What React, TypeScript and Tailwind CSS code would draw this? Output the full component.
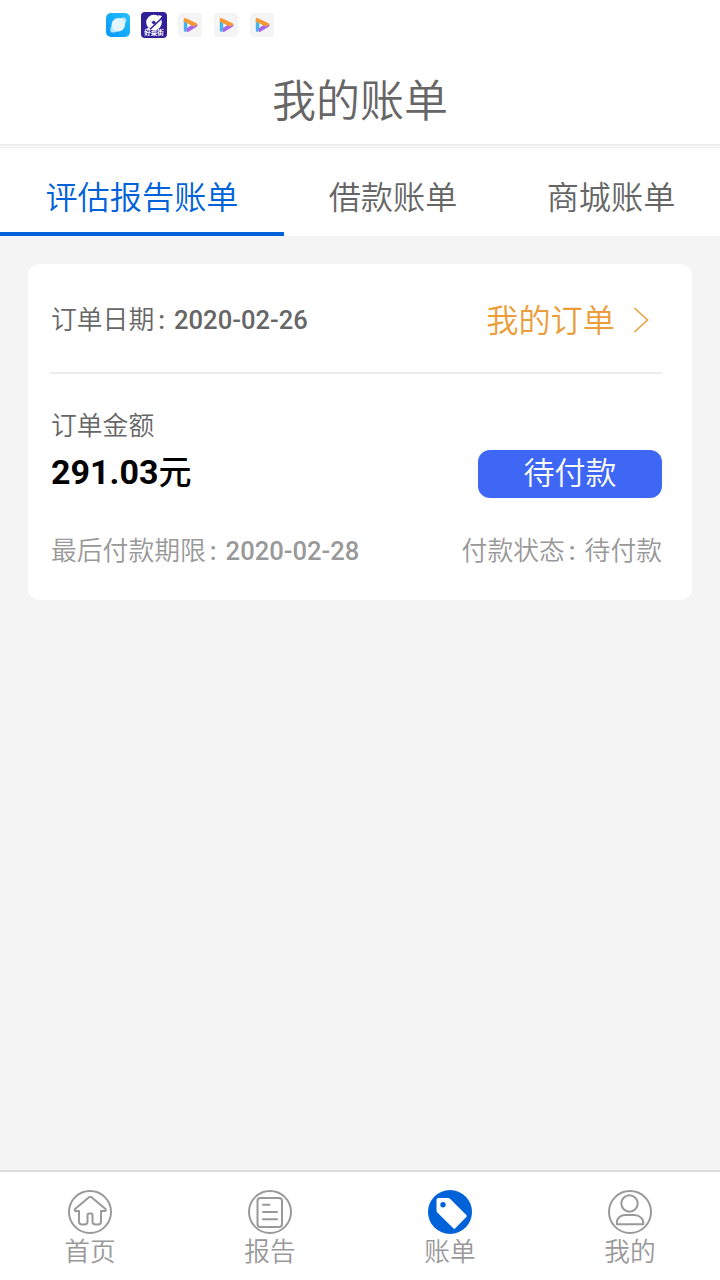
import type { ReactNode } from 'react';

const tabs = [
  { label: '评估报告账单', active: true, width: 'w-[284px]' },
  { label: '借款账单', active: false, width: 'w-[218px]' },
  { label: '商城账单', active: false, width: 'w-[218px]' },
];

function PlanetIcon() {
  return (
    <svg className="w-6 h-6" viewBox="0 0 24 24">
      <defs>
        <linearGradient id="sky" x1="1" y1="0" x2="0" y2="1">
          <stop offset="0" stopColor="#25c2fb" />
          <stop offset="1" stopColor="#0796fb" />
        </linearGradient>
      </defs>
      <rect width="24" height="24" rx="5" fill="url(#sky)" />
      <ellipse cx="12.3" cy="12" rx="10" ry="4.6" transform="rotate(-42 12.3 12)" fill="#b9e6fd" />
      <circle cx="12.3" cy="11.8" r="6.8" fill="#e4f5fe" />
    </svg>
  );
}

function WalletIcon() {
  return (
    <span className="relative block w-[26px] h-[26px] overflow-hidden rounded-[4px] bg-[#31209a]">
      <svg className="w-[26px] h-[26px]" viewBox="0 0 26 26">
        <circle cx="13" cy="10.5" r="7.8" fill="#fff" />
        <path d="M17 3l4 1-2 3M5 17l5-2-3 4z" fill="#fff" />
        <path d="M20.5 6.5L8.5 17.8" stroke="#31209a" strokeWidth="1.5" fill="none" />
        <path d="M10.3 10.2l2.7-1.7 2 2.2-2.4 1.9z" fill="#31209a" />
      </svg>
      <span className="absolute left-[-7px] w-10 top-[18px] text-center text-[6.500px] leading-[7px] font-bold text-white">好菜街</span>
    </span>
  );
}

function PlayIcon() {
  return (
    <svg className="w-6 h-6" viewBox="0 0 24 24">
      <rect width="24" height="24" rx="4" fill="#f4f4f4" />
      <path d="M5.800 7h3.400v8l-1 3.800H7q-1.200 0-1.200-1.200z" fill="#3fb5ee" />
      <path d="M19.300 11.200q.8 1.600-.7 2.600L10 18.900q-1.500.5-1.500-1.200v-2.200L16.500 10z" fill="#a866ea" />
      <path d="M5.800 6.200q0-1.700 1.700-1.100L18.600 10.300q.9.600.6 1.700l-3.300 1.500L5.800 8.800z" fill="#f49b38" />
    </svg>
  );
}

function HomeIcon() {
  return (
    <svg className="w-11 h-11" viewBox="0 0 44 44" fill="none" stroke="#999" strokeLinejoin="round" strokeLinecap="round">
      <circle cx="22" cy="22" r="21" strokeWidth="2" />
      <path
        d="M21 7.300L7 19q-1 2 1 2h3v10.500q0 3 3 3h2.500q3 0 3-3V25q0-1.500 1.500-1.500h2q1.500 0 1.500 1.500v6.500q0 3 3 3H30q3 0 3-3V21h3.500q2 0 1-2L23.500 7.300q-1.200-1-2.500 0z"
        strokeWidth="2"
      />
    </svg>
  );
}

function ReportIcon() {
  return (
    <svg className="w-11 h-11" viewBox="0 0 44 44" fill="none" stroke="#999" strokeWidth="2" strokeLinecap="round">
      <circle cx="22" cy="22" r="21" />
      <rect x="9.500" y="8" width="24.500" height="29" rx="3" />
      <path d="M15 14.800h6.500M15 22h14M15 29.200h14" />
    </svg>
  );
}

function BillIcon() {
  return (
    <svg className="w-11 h-11" viewBox="0 0 44 44">
      <circle cx="22" cy="22" r="22" fill="#0062d9" />
      <path
        fillRule="evenodd"
        d="M10.500 8H20q1.200 0 2 .8L38.300 25q1 1 0 2L27.300 38.200q-1 1-2 0L9.300 22.600q-.8-.8-.8-2V10q0-2 2-2zM15 12a2.700 2.700 0 1 0 0 5.400a2.700 2.700 0 1 0 0-5.400z"
        fill="#fff"
      />
    </svg>
  );
}

function MineIcon() {
  return (
    <svg className="w-11 h-11" viewBox="0 0 44 44" fill="none" stroke="#999" strokeWidth="2" strokeLinejoin="round">
      <circle cx="22" cy="22" r="21" />
      <circle cx="21.500" cy="13.500" r="8.200" />
      <path d="M9 34.200C8 29 12 25 17.500 25h8.500C31.500 25 36 29 35.300 34.200z" />
    </svg>
  );
}

function NavItem({ icon, label }: { icon: ReactNode; label: string }) {
  return (
    <div className="flex flex-1 flex-col items-center pt-[18px]">
      {icon}
      <span className="mt-0.5 text-[25.700px] leading-[32px] text-[#999]">{label}</span>
    </div>
  );
}

export default function App() {
  return (
    <div className="flex h-[1280px] w-[720px] flex-col overflow-hidden bg-[#f4f4f4] font-['Roboto','Noto_Sans_CJK_SC',sans-serif] font-[350] text-[#666] whitespace-nowrap">
      <div className="flex h-[50px] items-center gap-3 bg-white pl-[106px]">
        <PlanetIcon />
        <div className="-mx-px">
          <WalletIcon />
        </div>
        <PlayIcon />
        <PlayIcon />
        <PlayIcon />
      </div>

      <header className="flex h-[94px] items-center justify-center bg-white pt-[9px] text-[44px] leading-[64px]">我的账单</header>
      <div className="h-1 border-t-2 border-b border-[#ededed] bg-white" />

      <nav className="flex h-[88px] bg-white">
        {tabs.map((tab) => (
          <div
            key={tab.label}
            className={`${tab.width} flex items-center justify-center border-b-4 pt-[15px] text-[32.200px] leading-[48px] ${
              tab.active ? 'border-[#0062d9] text-[#0062d9]' : 'border-white'
            }`}
          >
            {tab.label}
          </div>
        ))}
      </nav>

      <main className="flex-1 px-7 pt-7">
        <section className="h-[336px] rounded-[12px] bg-white pr-[30px] pl-[22px]">
          <div className="flex h-[110px] items-center justify-between border-b-2 border-[#ededed]">
            <div className="pt-[3px] pl-px text-[25.800px] leading-[38px]">
              订单日期<span className="ml-1 font-medium">:<span className="ml-[9px] text-[25.600px]">2020-02-26</span></span>
            </div>
            <div className="flex items-center gap-[18px] pt-1.5 pr-[13px] text-[32.200px] leading-[48px] text-[#eb9d3a]">
              我的订单
              <svg className="-mt-0.5 h-[26px] w-4" viewBox="0 0 16 26" fill="none" stroke="currentColor" strokeWidth="1.500">
                <path d="M1.500 1L14.500 13L1.500 25" />
              </svg>
            </div>
          </div>

          <div className="flex h-[124px] items-end justify-between">
            <div className="pl-px">
              <div className="text-[25.800px] leading-[38px]">订单金额</div>
              <div className="mt-0.5 text-[34px] leading-[50px] font-bold text-black">
                291.03<span className="text-[33px] font-medium">元</span>
              </div>
            </div>
            <button className="h-12 w-[184px] rounded-[12px] bg-[#3f67f5] text-[31px] leading-[48px] text-white">待付款</button>
          </div>

          <div className="mt-[34px] flex justify-between pl-px text-[25.800px] leading-[38px] text-[#999]">
            <div>
              最后付款期限<span className="ml-1 font-medium">:<span className="ml-[9px] text-[25.600px]">2020-02-28</span></span>
            </div>
            <div>
              付款状态<span className="mr-[9px] ml-1 font-medium">:</span>待付款
            </div>
          </div>
        </section>
      </main>

      <footer className="flex h-[110px] border-t-2 border-[#ddd] bg-white">
        <NavItem icon={<HomeIcon />} label="首页" />
        <NavItem icon={<ReportIcon />} label="报告" />
        <NavItem icon={<BillIcon />} label="账单" />
        <NavItem icon={<MineIcon />} label="我的" />
      </footer>
    </div>
  );
}
